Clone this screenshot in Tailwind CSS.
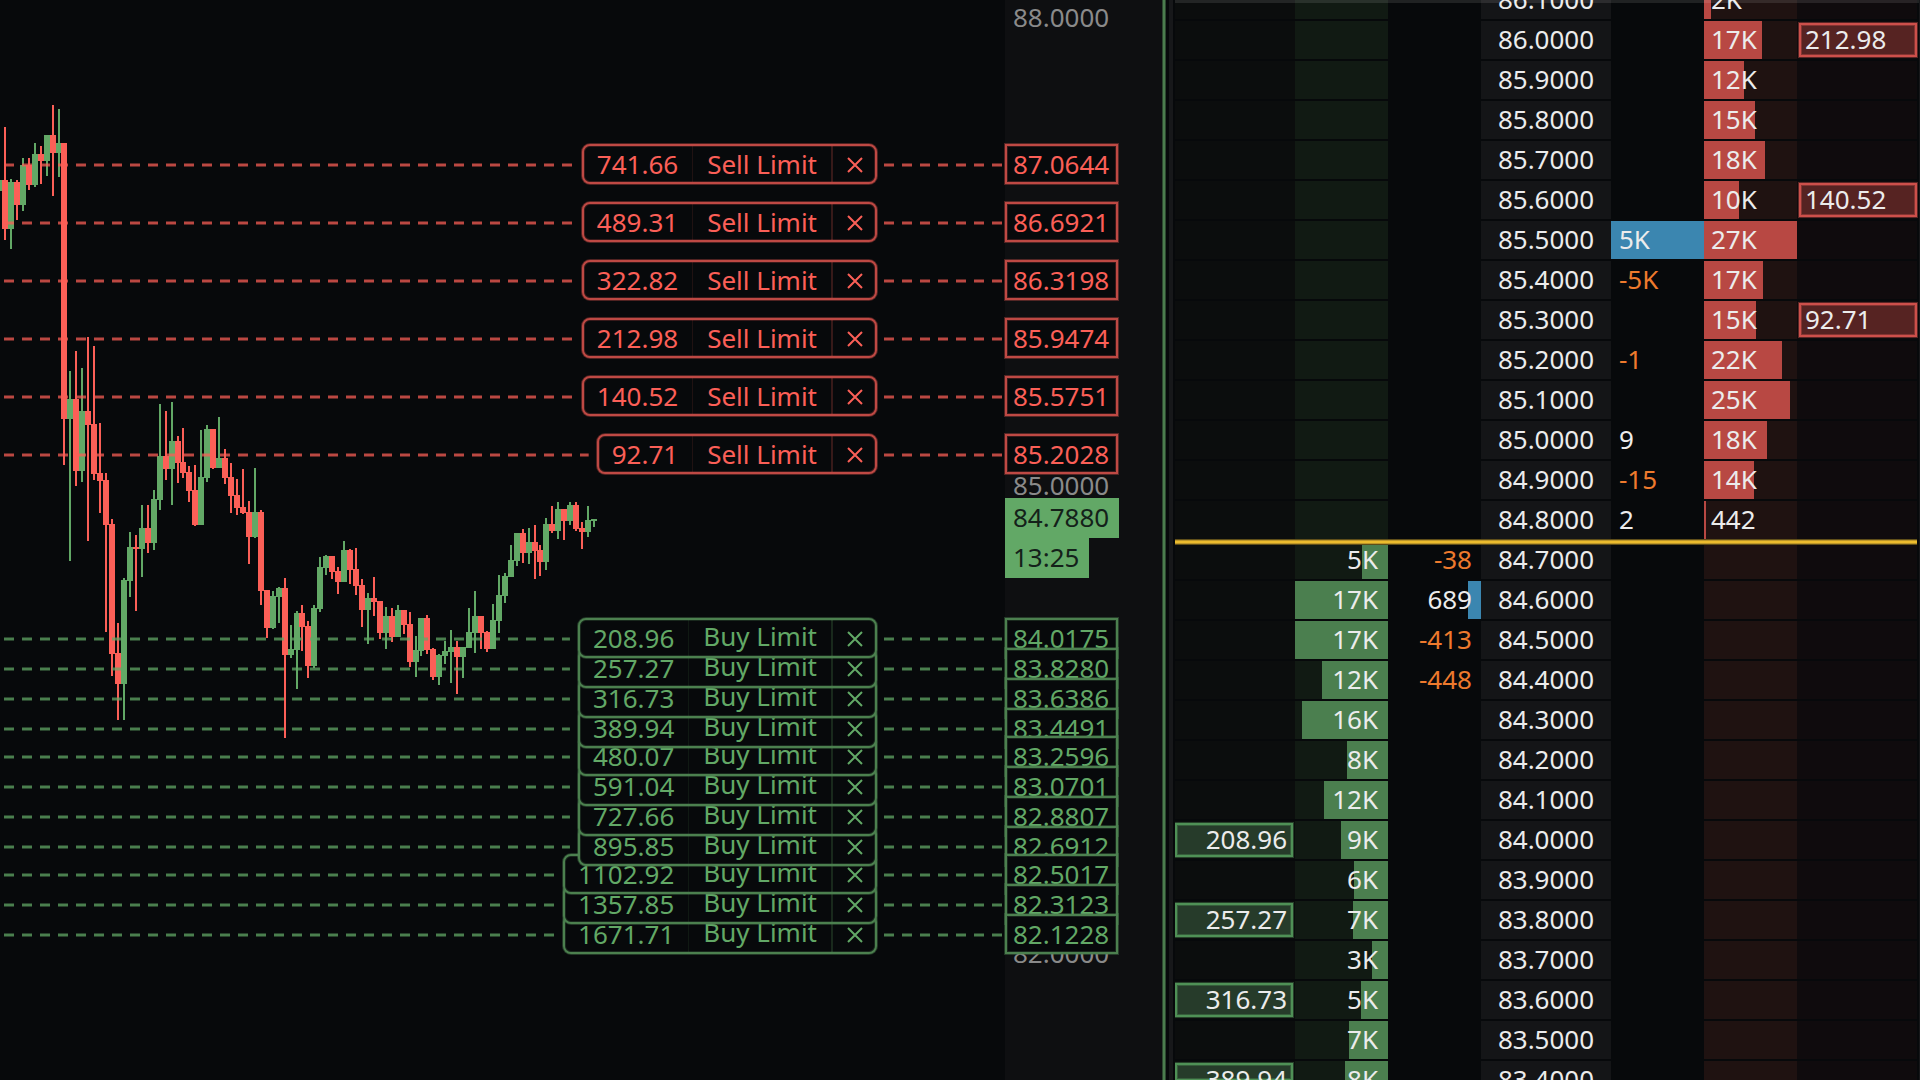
<!DOCTYPE html>
<html lang="en">
<head>
<meta charset="utf-8">
<title>Chart and price ladder</title>
<script src="https://cdn.jsdelivr.net/npm/@tailwindcss/browser@4"></script>
</head>
<body class="bg-[#07090b] font-['Noto_Sans',sans-serif] text-[26px] leading-10 text-[#ececec]">
<main class="flex h-screen overflow-hidden">
  <section id="chart" aria-label="Chart" class="relative min-w-0 flex-1 overflow-hidden">
    <svg id="candles" class="absolute left-0 top-0 h-full w-full" shape-rendering="crispEdges" aria-hidden="true"></svg>
    <div class="absolute inset-y-0 right-0 w-[157px] bg-[#0e0f11]"></div>
    <div id="scale" class="absolute inset-y-0 right-0 w-[157px] text-[#8a8a8a]"></div>
    <div class="absolute right-0 top-[498px] flex w-[157px] flex-col items-start leading-[38px] text-[#14211a]">
      <div class="w-[114px] bg-[#62a866] pb-0.5 pl-2">84.7880</div>
      <div class="w-[84px] bg-[#62a866] pb-0.5 pl-2">13:25</div>
    </div>
    <div id="orders"></div>
  </section>
  <div class="flex w-[13px] shrink-0">
    <div class="w-1 border-x border-[#2d4830] bg-[#4b7d4e]"></div>
    <div class="w-[3px]"></div>
    <div class="w-1 bg-[#17181a]"></div>
  </div>
  <section aria-label="Price ladder" class="relative w-[745px] shrink-0 overflow-hidden pr-[3px]">
    <table class="-mt-5 w-full table-fixed border-collapse">
      <colgroup>
        <col class="w-[120px]"><col class="w-[93px]"><col class="w-[93px]"><col class="w-[130px]"><col class="w-[93px]"><col class="w-[93px]"><col class="w-[120px]">
      </colgroup>
      <tbody id="ladder"></tbody>
    </table>
    <div class="absolute left-0 right-[3px] top-[539px] h-[6px] border-y border-[#5f4e19] bg-[#ecbc2e] shadow-[inset_0_1px_#bd9628,inset_0_-1px_#bd9628]"></div>
    <div class="absolute inset-x-0 top-0 h-[3px] bg-white/10"></div>
    <div class="absolute inset-y-0 right-0 w-px bg-[#17181a]"></div>
  </section>
</main>
<script>
  // Candles: colour, top of wick, top of body, bottom of body, bottom of wick
  const candles = `g 180 180 191 191|r 127 180 229 240|g 179 182 229 249|r 180 182 205 220|g 158 165 205 211|r 158 165 185 190|g 143 154 185 187|r 146 154 161 184|g 135 135 161 176|r 105 135 153 196|g 109 143 153 177|r 143 143 419 465|g 371 399 419 561|r 351 399 471 486|g 368 411 471 482|r 337 411 425 541|r 346 424 474 480|r 423 473 481 513|r 473 480 525 632|r 519 524 654 676|r 623 653 684 720|g 578 580 684 720|g 532 547 581 597|r 535 547 549 611|g 505 528 549 577|r 505 528 543 553|g 490 499 543 550|g 404 456 500 510|r 411 456 469 480|g 402 441 469 505|r 436 441 463 483|r 428 462 473 478|r 466 472 491 502|r 465 490 525 526|g 430 477 525 525|g 425 429 478 482|r 429 429 468 469|g 417 458 468 468|r 449 458 478 484|r 463 477 496 513|r 479 495 508 515|r 469 507 513 514|r 501 512 537 564|g 468 512 537 538|r 510 512 591 605|r 590 590 628 638|g 591 596 628 629|g 587 588 597 623|r 578 588 655 738|g 625 649 655 658|g 611 613 650 689|r 605 613 627 651|r 621 626 666 678|g 605 608 666 668|g 557 567 609 612|g 555 556 568 575|r 556 556 572 579|r 567 571 582 594|g 541 550 582 582|r 549 550 570 584|r 548 569 586 595|r 579 585 610 627|g 593 598 610 644|r 577 598 602 616|r 601 601 633 639|g 607 616 633 649|r 608 616 637 642|g 605 610 637 637|r 610 610 625 634|r 612 624 662 667|g 636 650 662 677|g 618 618 651 656|r 615 618 650 654|r 648 649 677 680|g 654 655 677 685|g 641 651 656 664|g 630 647 652 683|r 641 647 657 694|g 647 647 657 678|g 608 632 648 648|g 591 616 633 653|r 616 616 633 649|r 631 632 649 652|g 604 620 649 649|g 575 595 621 633|g 573 576 596 603|g 545 560 577 577|g 533 533 561 566|r 529 533 553 563|g 528 542 553 564|r 525 542 551 579|r 545 550 562 576|g 518 524 562 570|r 506 524 531 533|g 502 509 531 539|r 509 509 521 540|g 502 505 521 525|r 502 505 529 531|r 522 528 532 549|g 506 520 532 537|g 519 519 521 527`;
  const pitch = 595 / 100;
  document.getElementById('candles').innerHTML = candles.split('|').map((row, i) => {
    const [side, high, top, bottom, low] = row.split(' ');
    const x = Math.round(-4 + i * pitch);
    const fill = side === 'g' ? '#62a866' : '#fb5f57';
    return `<path fill="${fill}" d="M${x} ${top}h6V${bottom}h-6zM${x + 2} ${high}h2V${low}h-2z"/>`;
  }).join('');

  document.getElementById('scale').innerHTML = [['88.0000', 17], ['85.0000', 485], ['82.0000', 953]]
    .map(([label, y]) => `<div class="absolute left-2 -translate-y-1/2" style="top:${y}px">${label}</div>`).join('');

  // Working orders: side, size, price, vertical middle of the tag
  const orders = [
    ['Sell', '741.66', '87.0644', 164], ['Sell', '489.31', '86.6921', 222], ['Sell', '322.82', '86.3198', 280],
    ['Sell', '212.98', '85.9474', 338], ['Sell', '140.52', '85.5751', 396], ['Sell', '92.71', '85.2028', 454],
    ['Buy', '208.96', '84.0175', 638], ['Buy', '257.27', '83.8280', 668], ['Buy', '316.73', '83.6386', 698],
    ['Buy', '389.94', '83.4491', 728], ['Buy', '480.07', '83.2596', 756], ['Buy', '591.04', '83.0701', 786],
    ['Buy', '727.66', '82.8807', 816], ['Buy', '895.85', '82.6912', 846], ['Buy', '1102.92', '82.5017', 874],
    ['Buy', '1357.85', '82.3123', 904], ['Buy', '1671.71', '82.1228', 934],
  ];
  const look = {
    Sell: {
      text: 'text-[#fb5f57]',
      box: 'border-[#be4944] shadow-[0_0_0_1px_#be494466,inset_0_0_0_1px_#be494444]',
      faint: 'border-[#fb5f57]/10', rule: 'border-[#fb5f57]/20', lift: '',
    },
    Buy: {
      text: 'text-[#62a866]',
      box: 'border-[#4c804f] shadow-[0_0_0_1px_#4c804f66,inset_0_0_0_1px_#4c804f44]',
      faint: 'border-[#62a866]/10', rule: 'border-[#62a866]/20', lift: '-mt-0.5',
    },
  };
  const dashes = '<svg class="h-1.5 w-full" aria-hidden="true"><line x1="0" x2="100%" y1="4" y2="4" stroke="currentColor" stroke-opacity=".74" stroke-width="3" stroke-dasharray="10 8"/></svg>';
  document.getElementById('orders').innerHTML = orders.map(([side, size, price, y], i) => {
    const s = look[side];
    return `<div class="absolute left-1 right-[285px] flex h-10 -translate-y-1/2 items-center ${s.text}" style="top:${y}px;z-index:${40 - i}">
      <div class="mr-2 flex flex-1 overflow-hidden">${dashes}</div>
      <div class="flex h-10 items-stretch overflow-hidden rounded-lg border-2 bg-[#07090b] leading-9 ${s.box}">
        <span class="border-r pl-[13px] pr-[14px] ${s.faint}">${size}</span>
        <span class="border-r-2 px-[14px] ${s.rule}"><span class="block ${s.lift}">${side} Limit</span></span>
        <button type="button" aria-label="Cancel order" class="flex w-[42px] items-center justify-center pl-0.5 pt-0.5">
          <svg class="size-4" viewBox="0 0 16 16" fill="none" stroke="currentColor" stroke-width="2"><path d="M1 1l14 14M15 1L1 15"/></svg>
        </button>
      </div>
    </div>
    <div class="absolute right-[160px] flex w-[118px] -translate-y-1/2 ${s.text}" style="top:${y}px">${dashes}</div>
    <div class="absolute right-[44px] flex h-10 w-[113px] -translate-y-1/2 border-2 bg-[#07090b] pl-1.5 leading-9 ${s.text} ${s.box}" style="top:${y}px">${price}</div>`;
  }).join('');

  // Ladder rows: p price, bid/ask [size, bar width], bidDelta/askDelta [change, bar width], ownBid/ownAsk own order size
  const rows = [
    { p: '86.1000', ask: ['2K', 7] }, { p: '86.0000', ask: ['17K', 58], ownAsk: '212.98' },
    { p: '85.9000', ask: ['12K', 40] }, { p: '85.8000', ask: ['15K', 51] }, { p: '85.7000', ask: ['18K', 61] },
    { p: '85.6000', ask: ['10K', 35], ownAsk: '140.52' }, { p: '85.5000', askDelta: ['5K', 93], ask: ['27K', 93] },
    { p: '85.4000', askDelta: ['-5K', 0], ask: ['17K', 59] }, { p: '85.3000', ask: ['15K', 52], ownAsk: '92.71' },
    { p: '85.2000', askDelta: ['-1', 0], ask: ['22K', 78] }, { p: '85.1000', ask: ['25K', 86] },
    { p: '85.0000', askDelta: ['9', 0], ask: ['18K', 63] }, { p: '84.9000', askDelta: ['-15', 0], ask: ['14K', 50] },
    { p: '84.8000', askDelta: ['2', 0], ask: ['442', 2] },
    { p: '84.7000', bid: ['5K', 26], bidDelta: ['-38', 0] }, { p: '84.6000', bid: ['17K', 93], bidDelta: ['689', 13] },
    { p: '84.5000', bid: ['17K', 93], bidDelta: ['-413', 0] }, { p: '84.4000', bid: ['12K', 66], bidDelta: ['-448', 0] },
    { p: '84.3000', bid: ['16K', 86] }, { p: '84.2000', bid: ['8K', 41] }, { p: '84.1000', bid: ['12K', 64] },
    { p: '84.0000', bid: ['9K', 47], ownBid: '208.96' }, { p: '83.9000', bid: ['6K', 34] },
    { p: '83.8000', bid: ['7K', 35], ownBid: '257.27' }, { p: '83.7000', bid: ['3K', 16] },
    { p: '83.6000', bid: ['5K', 27], ownBid: '316.73' }, { p: '83.5000', bid: ['7K', 39] },
    { p: '83.4000', bid: ['8K', 43], ownBid: '389.94', cut: true },
  ];
  const bar = (cell, side, fill) => {
    const [text, width] = cell || ['', 0];
    const tone = text.startsWith('-') ? 'text-[#ee7a2d]' : '';
    return (width ? `<div class="absolute inset-y-0 ${side} ${fill}" style="width:${width}px"></div>` : '') +
      `<span class="relative ${tone}">${text}</span>`;
  };
  const own = (text, style, cut) => text
    ? `<div class="absolute inset-x-0 top-0.5 border-2 ${cut ? 'h-[18px]' : 'h-[34px]'} ${style}"></div><span class="relative">${text}</span>` : '';
  const cell = 'relative my-px h-[38px] leading-9';
  document.getElementById('ladder').innerHTML = rows.map(r => `<tr class="h-10">
    <td class="p-0"><div class="${cell} bg-[#0b0d0d] pr-2 text-right">${own(r.ownBid, 'right-[2px] border-[#4f9056] bg-[#263b2a] shadow-[0_0_0_1px_#4f905666,inset_0_0_0_1px_#4f905666]', r.cut)}</div></td>
    <td class="p-0"><div class="${cell} bg-[#111a13] pr-2.5 text-right">${bar(r.bid, 'right-0', 'bg-[#4b7f4f]')}</div></td>
    <td class="p-0"><div class="${cell} pr-[9px] text-right">${bar(r.bidDelta, 'right-0', 'bg-[#3b86b0]')}</div></td>
    <td class="p-0"><div class="${cell} bg-[#141517] text-center">${r.p}</div></td>
    <td class="p-0"><div class="${cell} pl-2">${bar(r.askDelta, 'left-0', 'bg-[#3b86b0]')}</div></td>
    <td class="p-0"><div class="${cell} bg-[#1f1211] pl-[7px]">${bar(r.ask, 'left-0', 'bg-[#b84843]')}</div></td>
    <td class="p-0"><div class="${cell} bg-[#0f0b0d] pl-2">${own(r.ownAsk, 'left-[2px] border-[#cd504b] bg-[#562322] shadow-[0_0_0_1px_#cd504b66,inset_0_0_0_1px_#cd504b66]')}</div></td>
  </tr>`).join('');
</script>
</body>
</html>
